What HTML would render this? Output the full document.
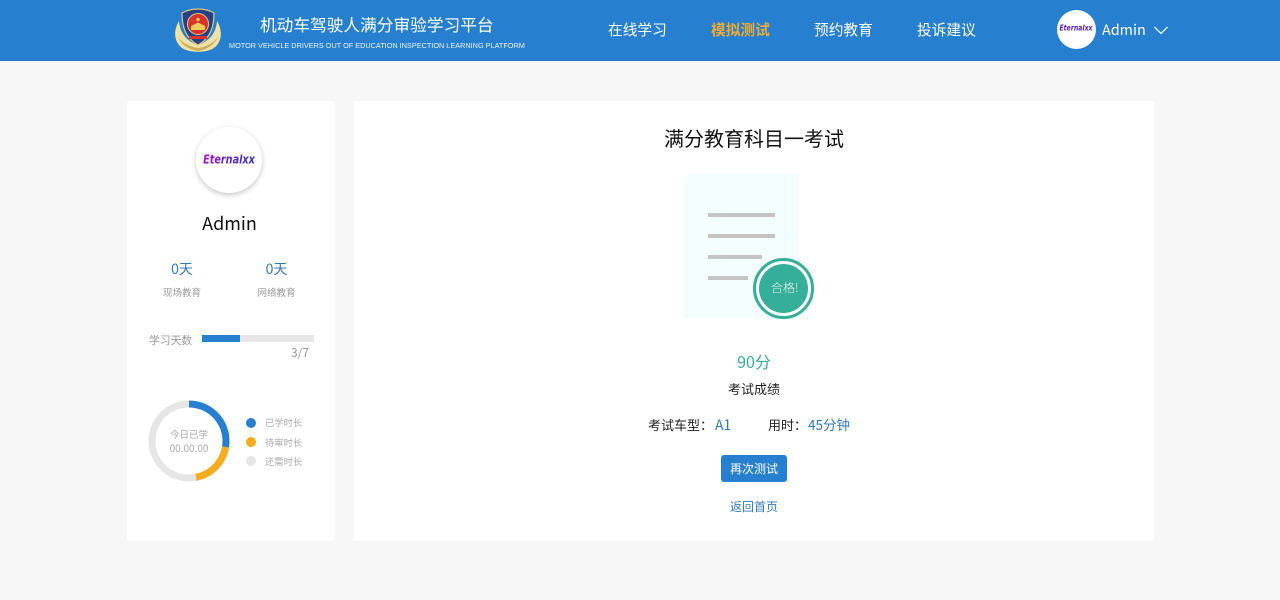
<!DOCTYPE html>
<html lang="zh"><head><meta charset="utf-8"><title>满分教育科目一考试</title>
<style>
*{margin:0;padding:0;box-sizing:border-box}
html,body{width:1280px;height:600px;overflow:hidden;background:#f7f7f7;font-family:"Liberation Sans","Noto Sans CJK SC",sans-serif}
.t{position:absolute;white-space:nowrap;line-height:1;font-family:"Noto Sans CJK SC","Liberation Sans",sans-serif}
.b{position:absolute}
.c{text-align:center;transform:translateX(-50%)}
</style></head><body>
<div class="b" style="left:0;top:0;width:1280px;height:61px;background:#2680cf"></div>
<svg class="b" style="left:174px;top:7px" width="48" height="48" viewBox="0 0 48 48">
<path d="M5 14C-1 24 0 35 8 41C15 46 33 46 40 41C48 35 49 24 43 14C42 24 38 33 24 38C10 33 6 24 5 14Z" fill="#eee2a6"/>
<path d="M4 30C8 39 17 43 24 44C31 43 40 39 44 30C39 37 31 40 24 41C17 40 9 37 4 30Z" fill="#cbae5c"/>
<path d="M24 2C18 2 13 3 8 6C8 19 11 31 24 38C37 31 40 19 40 6C35 3 30 2 24 2Z" fill="#27408a" stroke="#dcc777" stroke-width="1.200"/>
<circle cx="24" cy="17" r="10.500" fill="#d8322c" stroke="#e6cf72" stroke-width="1"/>
<circle cx="24" cy="12.500" r="1.800" fill="#f4d34c"/>
<path d="M17 23V19L24 15.500L31 19V23Z" fill="#efcd5c"/>
<rect x="15" y="29" width="18" height="3" fill="#d8322c"/>
</svg>
<div class="t" style="left:260px;top:16px;font-size:16.700px;color:#fff">机动车驾驶人满分审验学习平台</div>
<div class="t" style="left:229px;top:42px;font-size:7.300px;color:#eaf3fb;font-family:'Liberation Sans',sans-serif">MOTOR VEHICLE DRIVERS OUT OF EDUCATION INSPECTION LEARNING PLATFORM</div>
<div class="t" style="left:608px;top:23px;font-size:14.700px;color:#fff">在线学习</div>
<div class="t" style="left:711px;top:23px;font-size:14.700px;color:#eeaa33;font-weight:700">模拟测试</div>
<div class="t" style="left:814px;top:23px;font-size:14.700px;color:#fff">预约教育</div>
<div class="t" style="left:917px;top:23px;font-size:14.700px;color:#fff">投诉建议</div>
<div class="b" style="left:1057px;top:10px;width:39px;height:39px;border-radius:50%;background:#fff"></div>
<div class="t c" style="left:1076px;top:26px;font-size:6.200px;font-weight:700;font-style:italic;color:#5a1fb8;font-family:'DejaVu Sans',sans-serif;transform:translateX(-50%) scaleY(1.3)">Eternalxx</div>
<div class="t" style="left:1102px;top:23px;font-size:14.400px;color:#fff">Admin</div>
<svg class="b" style="left:1153px;top:25px" width="16" height="11" viewBox="0 0 16 11"><path d="M1.500 2L8 8.500L14.500 2" fill="none" stroke="#fff" stroke-width="1.200"/></svg>

<div class="b" style="left:127px;top:101px;width:208px;height:440px;background:#fff;border-radius:3px"></div>
<div class="b" style="left:354px;top:101px;width:800px;height:440px;background:#fff;border-radius:3px"></div>

<div class="b" style="left:196px;top:127px;width:66px;height:66px;border-radius:50%;background:#fff;box-shadow:0 2px 6px rgba(0,0,0,.22)"></div>
<div class="t c" style="left:229px;top:156px;font-size:9.700px;font-weight:700;font-style:italic;font-family:'DejaVu Sans',sans-serif;background:linear-gradient(90deg,#a513c0,#2a35d0);-webkit-background-clip:text;background-clip:text;color:transparent;transform:translateX(-50%) scaleY(1.3)">Eternalxx</div>
<div class="t c" style="left:229.500px;top:214px;font-size:18px;color:#111">Admin</div>
<div class="t c" style="left:182px;top:262px;font-size:14px;color:#337ab7">0天</div>
<div class="t c" style="left:276.500px;top:262px;font-size:14px;color:#337ab7">0天</div>
<div class="t c" style="left:182px;top:288px;font-size:9.500px;color:#999">现场教育</div>
<div class="t c" style="left:276.500px;top:288px;font-size:9.500px;color:#999">网络教育</div>
<div class="t" style="left:149px;top:335px;font-size:10.800px;color:#999">学习天数</div>
<div class="b" style="left:202px;top:335px;width:112px;height:7px;background:#e6e6e6"></div>
<div class="b" style="left:202px;top:335px;width:38px;height:7px;background:#2680cf"></div>
<div class="t" style="left:291px;top:347px;font-size:12px;color:#999">3/7</div>

<svg class="b" style="left:147px;top:399px" width="84" height="84" viewBox="0 0 84 84">
<circle cx="42" cy="42" r="37" fill="none" stroke="#e6e6e6" stroke-width="7"/>
<path d="M42 5A37 37 0 0 1 78.500 48" fill="none" stroke="#2680cf" stroke-width="7"/>
<path d="M78.500 48A37 37 0 0 1 49 78.300" fill="none" stroke="#f5ad1f" stroke-width="7"/>
</svg>
<div class="t c" style="left:189px;top:430px;font-size:9.500px;color:#aaa">今日已学</div>
<div class="t c" style="left:189px;top:443px;font-size:10px;color:#aaa">00.00.00</div>
<div class="b" style="left:246px;top:418px;width:10px;height:10px;border-radius:50%;background:#2680cf"></div>
<div class="b" style="left:246px;top:437px;width:10px;height:10px;border-radius:50%;background:#f5ad1f"></div>
<div class="b" style="left:246px;top:456px;width:10px;height:10px;border-radius:50%;background:#e6e6e6"></div>
<div class="t" style="left:265px;top:418px;font-size:9.300px;color:#aaa">已学时长</div>
<div class="t" style="left:265px;top:437.500px;font-size:9.300px;color:#aaa">待审时长</div>
<div class="t" style="left:265px;top:456.600px;font-size:9.300px;color:#aaa">还需时长</div>

<div class="t c" style="left:754px;top:128px;font-size:20px;color:#111">满分教育科目一考试</div>
<div class="b" style="left:684px;top:174px;width:115px;height:145px;background:#f3fcff;border-top-left-radius:7px"></div>
<div class="b" style="left:708px;top:213px;width:67px;height:4px;background:#c4c4c4"></div>
<div class="b" style="left:708px;top:234px;width:67px;height:4px;background:#c4c4c4"></div>
<div class="b" style="left:708px;top:255px;width:54px;height:4px;background:#c4c4c4"></div>
<div class="b" style="left:708px;top:276px;width:40px;height:4px;background:#c4c4c4"></div>
<div class="b" style="left:753px;top:258px;width:61px;height:61px;border-radius:50%;background:#fff;border:3px solid #35ae9a"></div>
<div class="b" style="left:759px;top:264px;width:49px;height:49px;border-radius:50%;background:#35ae9a"></div>
<div class="t" style="left:771px;top:282px;font-size:12px;font-weight:300;color:#e6f7f3">合格!</div>
<div class="t c" style="left:754px;top:353px;font-size:16px;color:#35ae9a">90分</div>
<div class="t c" style="left:754px;top:382px;font-size:13px;color:#222">考试成绩</div>
<div class="t" style="left:648px;top:418px;font-size:13px;color:#222">考试车型：</div>
<div class="t" style="left:715px;top:418px;font-size:14px;color:#337ab7">A1</div>
<div class="t" style="left:768px;top:418px;font-size:13px;color:#222">用时：</div>
<div class="t" style="left:808px;top:418px;font-size:13.500px;color:#337ab7">45分钟</div>
<div class="b" style="left:721px;top:455px;width:66px;height:27px;background:#2680cf;border-radius:3px"></div>
<div class="t c" style="left:754px;top:462.500px;font-size:12px;color:#fff">再次测试</div>
<div class="t c" style="left:754px;top:500.500px;font-size:12px;color:#337ab7">返回首页</div>
</body></html>
